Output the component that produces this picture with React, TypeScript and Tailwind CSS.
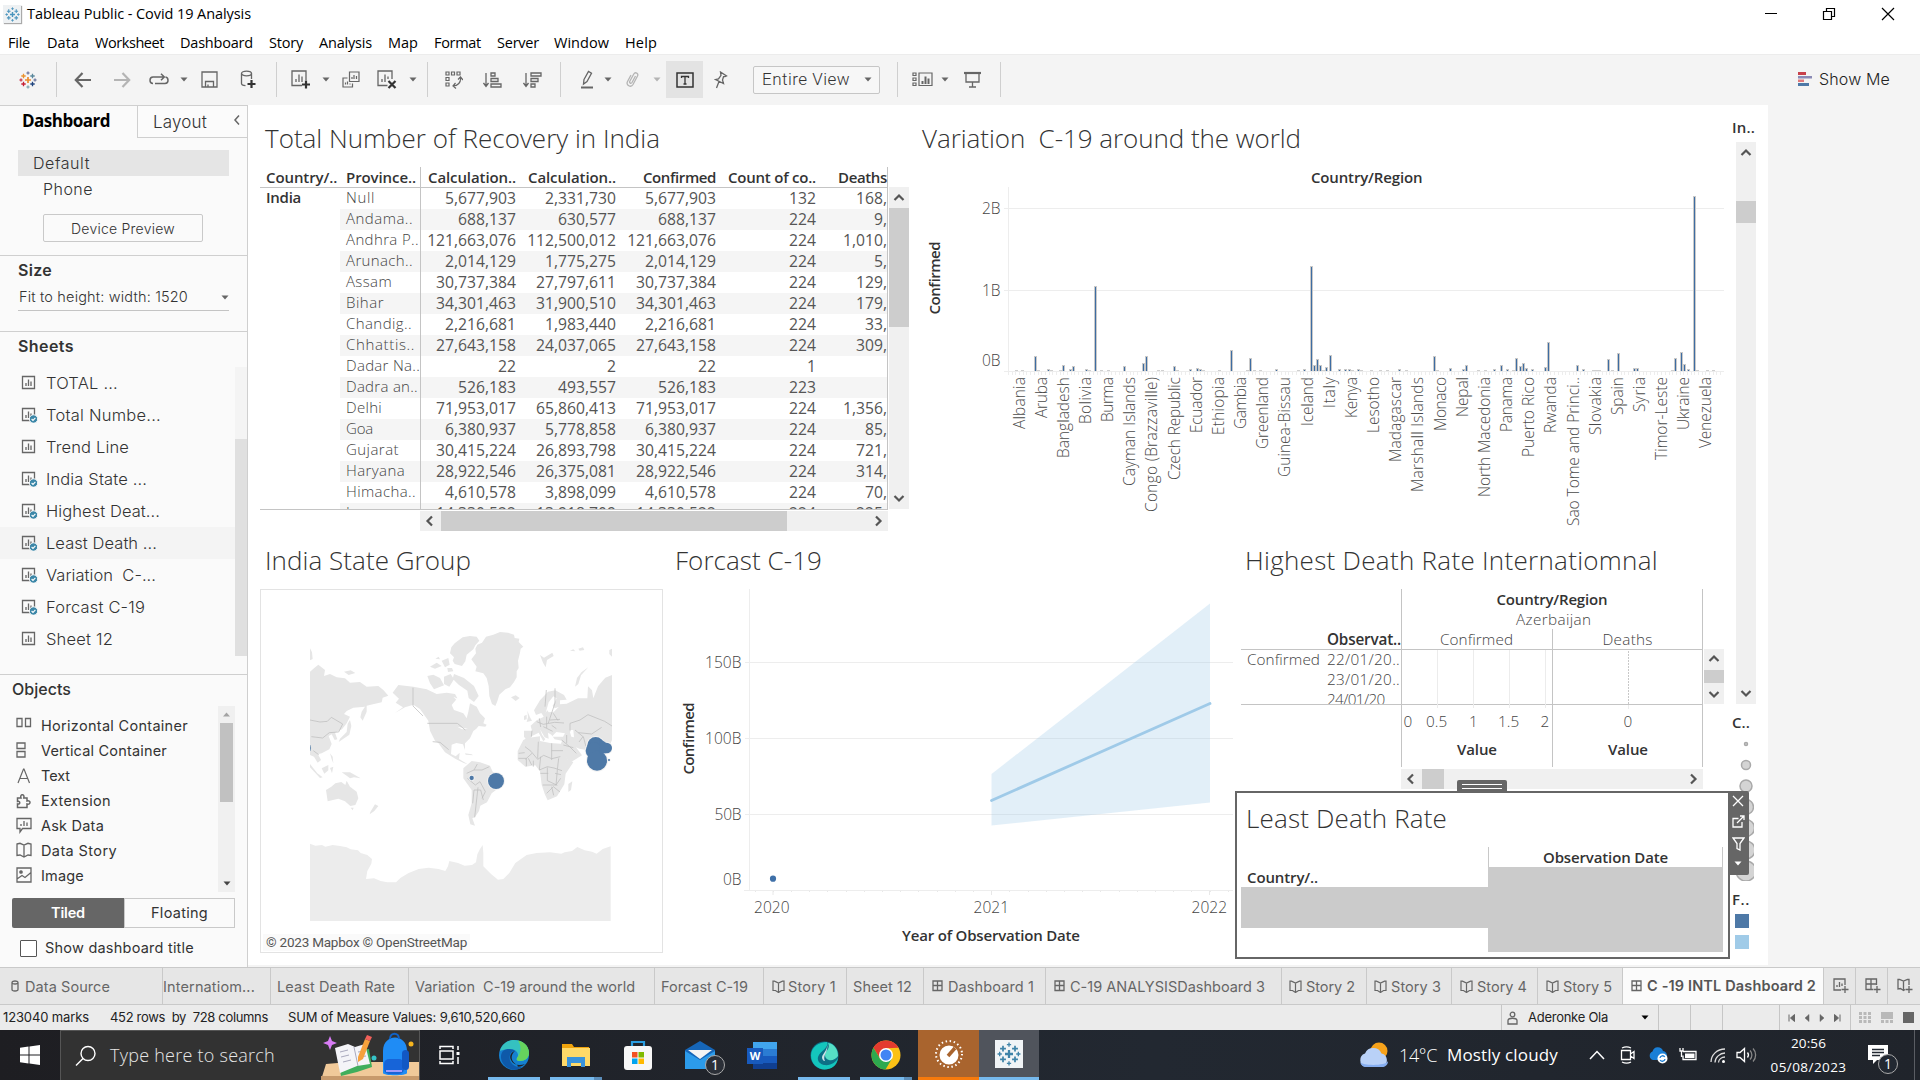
import { useLayoutEffect, useRef, useState, type ReactNode } from "react";

/* Text set to a given measure by distributing the difference between its letters. */
function T({ w, children, className = "" }: { w: number; children: string; className?: string }) {
  const ref = useRef<HTMLSpanElement>(null);
  const [gap, setGap] = useState(0);
  useLayoutEffect(() => {
    const el = ref.current;
    if (!el) return;
    const old = el.style.letterSpacing;
    el.style.letterSpacing = "0px";
    const natural = el.getBoundingClientRect().width;
    el.style.letterSpacing = old;
    setGap((w - natural) / children.length);
  }, [w, children]);
  return (
    <span ref={ref} className={"inline-block whitespace-pre " + className} style={{ letterSpacing: gap + "px" }}>
      {children}
    </span>
  );
}

/* ---------- small icons ---------- */
function Svg({ w, h, children, className = "" }: { w: number; h: number; children: ReactNode; className?: string }) {
  return (
    <svg width={w} height={h} viewBox={`0 0 ${w} ${h}`} fill="none" stroke="#666" strokeWidth="1.3" className={"shrink-0 " + className}>
      {children}
    </svg>
  );
}
const Caret = ({ c = "#666" }: { c?: string }) => (
  <Svg w={8} h={5}><path d="M0.5 0.5h7l-3.500 4z" fill={c} stroke="none" /></Svg>
);
const Chevron = ({ dir }: { dir: "up" | "down" | "left" | "right" }) => {
  const d = { up: "M2.500 9L7 4.500 11.500 9", down: "M2.500 5L7 9.500 11.500 5", left: "M9 2.500L4.500 7 9 11.500", right: "M5 2.500L9.500 7 5 11.500" }[dir];
  return <Svg w={14} h={14}><path d={d} stroke="#555" strokeWidth="2.2" /></Svg>;
};
const plus = (x: number, y: number, r: number, c: string, key?: number, sw = 1.6) => (
  <path key={key} d={`M${x - r} ${y}h${2 * r}M${x} ${y - r}v${2 * r}`} stroke={c} strokeWidth={sw} />
);
const TableauMark = ({ s = 18, mono }: { s?: number; mono?: string }) => (
  <svg width={s} height={s} viewBox="0 0 18 18" fill="none" className="shrink-0">
    {plus(9, 9, 3, mono ?? "#eb8a2d", 0, 1.7)}
    {plus(4.5, 5, 2.2, mono ?? "#eb912c", 1, 1.3)}
    {plus(13.5, 5, 2.2, mono ?? "#59879b", 2, 1.3)}
    {plus(4.5, 13, 2.2, mono ?? "#c72035", 3, 1.3)}
    {plus(13.5, 13, 2.2, mono ?? "#1f447e", 4, 1.3)}
    {plus(9, 2, 1.6, mono ?? "#5b6591", 5, 1)}
    {plus(9, 16, 1.6, mono ?? "#7099a6", 6, 1)}
    {plus(2, 9, 1.6, mono ?? "#c72035", 7, 1)}
    {plus(16, 9, 1.6, mono ?? "#5b6591", 8, 1)}
  </svg>
);
const Sep = () => <div className="h-[35px] w-px bg-[#cfcfcf]" />;
const Cell = ({ className, children }: { className: string; children: ReactNode }) => (
  <div className={"flex shrink-0 items-center justify-center " + className}>{children}</div>
);
const SheetIcon = ({ used }: { used?: boolean }) => (
  <Svg w={18} h={16}>
    <path d="M13.5 1.5H1.5v12h12z" />
    <path d="M5 11V8M7.5 11V4.5M10 11V6.5" />
    {used && (
      <>
        <circle cx="12.5" cy="12" r="4.2" fill="#3c87a8" stroke="#fafafa" strokeWidth="1" />
        <path d="M10.6 12l1.4 1.4 2.4-2.6" stroke="#fff" strokeWidth="1.1" />
      </>
    )}
  </Svg>
);
const GridIcon = () => (
  <Svg w={11} h={12}><path d="M1 1h9v9.500H1zM1 5.500h9M5.500 1v9.500" stroke="#666" /></Svg>
);
const BookIcon = () => (
  <Svg w={13} h={13}><path d="M1 1.200h1.500L6.500 3l4-1.800H12v9.300h-2.500l-3 2-3-2H1zM6.500 3v9" stroke="#666" strokeWidth="1.200" /></Svg>
);

/* ---------- title bar, menu, toolbar ---------- */
const menu: [string, number, string][] = [
  ["File", 22, "w-[39px]"], ["Data", 32, "w-[48px]"], ["Worksheet", 69, "w-[85px]"], ["Dashboard", 73, "w-[89px]"],
  ["Story", 34, "w-[50px]"], ["Analysis", 53, "w-[69px]"], ["Map", 30, "w-[46px]"], ["Format", 47, "w-[63px]"],
  ["Server", 42, "w-[57px]"], ["Window", 55, "w-[71px]"], ["Help", 32, "w-[40px]"],
];

function Header() {
  return (
    <header className="h-[105px] bg-white font-['Open_Sans',sans-serif] text-[14.5px] text-black">
      <div className="flex h-[28px] items-center pl-[3px]">
        <div className="mr-[6px] flex size-[18px] items-center justify-center bg-[#eef1f3] shadow-[1px_1px_1px_#aaa]">
          <TableauMark s={15} mono="#4a94bd" />
        </div>
        <T w={224}>Tableau Public - Covid 19 Analysis</T>
        <div className="ml-auto flex items-center pr-[25px]">
          <Svg w={14} h={14}><path d="M1 6.500h12" stroke="#000" strokeWidth="1" /></Svg>
          <Svg w={14} h={14} className="ml-[44px]"><path d="M1.500 4.500h8v8h-8zM4.500 4V1.500h8v8h-3" stroke="#000" strokeWidth="1.200" /></Svg>
          <Svg w={14} h={14} className="ml-[45px]"><path d="M1 1l12 12M13 1L1 13" stroke="#000" strokeWidth="1.200" /></Svg>
        </div>
      </div>
      <nav className="flex h-[26px] items-center pl-[8px] pt-[4px]">
        {menu.map(([m, w, c]) => (
          <div key={m} className={"shrink-0 " + c}><T w={w}>{m}</T></div>
        ))}
      </nav>
      <div className="flex h-[51px] items-center border-t border-[#ececec] bg-[#f4f4f4] pb-px">
        <Cell className="w-[56px]"><TableauMark s={18} /></Cell>
        <Sep />
        <Cell className="ml-[6px] w-[40px]"><Svg w={18} h={16}><path d="M17 8H2M8.500 1L1.800 8l6.700 7" strokeWidth="2.200" /></Svg></Cell>
        <Cell className="w-[38px]"><Svg w={18} h={16}><path d="M1 8h15M9.500 1l6.700 7-6.700 7" stroke="#b4b4b4" strokeWidth="2.200" /></Svg></Cell>
        <Cell className="w-[36px]"><Svg w={20} h={14}><path d="M4 10.500c-2 0-3-1.200-3-3.200s1-3.300 3-3.300h11M12 .8L15.300 4 12 7.200M16.500 4c1.800.2 2.500 1.500 2.500 3.300s-1 3.200-3 3.200H6" strokeWidth="1.500" /></Svg></Cell>
        <Cell className="w-[13px]"><Caret /></Cell>
        <Cell className="w-[38px]"><Svg w={17} h={17}><path d="M1 1h15v15H1zM4.500 16v-5.500h8V16M7 16v-2.500" /></Svg></Cell>
        <Cell className="w-[40px]"><Svg w={16} h={20}><ellipse cx="6.500" cy="3.500" rx="5" ry="2.300" /><path d="M1.500 3.500v10c0 1.200 2 2 4 2.200M11.500 3.500V9" /><path d="M11.500 10v8M7.500 14h8" stroke="#333" strokeWidth="2.200" /></Svg></Cell>
        <div className="w-[8px]" />
        <Sep />
        <Cell className="ml-[7px] w-[34px]"><Svg w={20} h={19}><path d="M15 10V1H1v14.500h10M5 12V9M8 12V4.500M11 12V6.500" /><path d="M15 10.500v8M11 14.500h8" stroke="#333" strokeWidth="2.200" /></Svg></Cell>
        <Cell className="w-[15px]"><Caret /></Cell>
        <Cell className="w-[35px]"><Svg w={18} h={17}><path d="M7.500 1h9.500v9.500H7.500zM10 8V6M12 8V4M14.500 8V5M5.500 7H1v9h9.500v-3.500M3.500 13.500v-2M5.500 13.500v-3M8 13.500v-1" strokeWidth="1.200" /></Svg></Cell>
        <Cell className="w-[38px]"><Svg w={20} h={19}><path d="M15 9V1H1v14.500h9.500M5 12V9M8 12V4.500M11 9V6.500" /><path d="M11.500 11l7 7M18.500 11l-7 7" stroke="#333" strokeWidth="2.200" /></Svg></Cell>
        <Cell className="w-[14px]"><Caret /></Cell>
        <div className="w-[7px]" />
        <Sep />
        <Cell className="ml-[7px] w-[37px]"><Svg w={18} h={18}><path d="M1 1h3v3H1zM6.500 1h3v3h-3zM12 1h3v3h-3zM1 6.500h3v3H1zM1 12h3v3H1zM15.500 7c.5 4-2.500 8-7.500 8M13 8.500l2.500-2.500L18 9M10.500 12L8 15l3 2.500" strokeWidth="1.200" /></Svg></Cell>
        <Cell className="w-[41px]"><Svg w={19} h={16}><path d="M3 1v13M.500 11L3 14.500 5.500 11M8 1h4v3H8zM8 6.500h7v3H8zM8 12h10v3H8z" /></Svg></Cell>
        <Cell className="w-[38px]"><Svg w={19} h={16}><path d="M3 1v13M.500 11L3 14.500 5.500 11M8 1h10v3H8zM8 6.500h7v3H8zM8 12h4v3H8z" /></Svg></Cell>
        <div className="w-[9px]" />
        <Sep />
        <Cell className="ml-[12px] w-[28px]"><Svg w={14} h={19}><path d="M4 9.500L8.500 1.500l3 1.700L7 11.500l-3.500 2.500z" /><path d="M1 17.500h12" strokeWidth="2" /></Svg></Cell>
        <Cell className="w-[14px]"><Caret /></Cell>
        <Cell className="w-[34px]"><Svg w={14} h={17}><path d="M10.500 5L7 11.500c-1 1.500-3 .5-2.200-1.200l4-7.300c1.500-2.500 5-.5 3.700 2L8 13.500c-2 3.500-7.500.8-5.500-3L6 4" stroke="#b4b4b4" /></Svg></Cell>
        <Cell className="w-[16px]"><Caret c="#b4b4b4" /></Cell>
        <Cell className="ml-px h-[37px] w-[37px] bg-[#e3e3e3]"><Svg w={18} h={16}><path d="M1 1h16v14H1z" stroke="#333" strokeWidth="1.500" /><path d="M5.500 6V4.500h7V6M9 4.500v7.500M7.500 12h3" stroke="#333" /></Svg></Cell>
        <Cell className="w-[36px]"><Svg w={14} h={18}><path d="M6.500 1l6 4-1.500.7-1.500 0L8.500 9l1 3.500L1.500 8.500l3-.7 2.500-3.500zM5 10.500L2.500 17" /></Svg></Cell>
        <div className="ml-[14px] flex h-[28px] w-[127px] items-center rounded-[2px] border border-[#c6c6c6] bg-[#f7f7f7] font-['Roboto',sans-serif] text-[17px] font-light text-[#333]">
          <T w={88} className="ml-[8px] pt-px">Entire View</T>
          <div className="ml-[7px] h-full w-px bg-[#d4d4d4]" />
          <Cell className="w-[22px]"><Caret /></Cell>
        </div>
        <div className="w-[17px]" />
        <Sep />
        <Cell className="ml-[8px] w-[33px]"><Svg w={21} h={15}><path d="M1 1h3v2.500H1zM1 6h3v2.500H1zM1 11h3v2.500H1zM7 1h13v12.500H7z" strokeWidth="1.200" /><path d="M10.500 12V9M13.500 12V4.500M16.500 12V6.500" strokeWidth="2" /></Svg></Cell>
        <Cell className="w-[12px]"><Caret /></Cell>
        <Cell className="w-[42px]"><Svg w={17} h={17}><path d="M0 2h17" strokeWidth="2.200" /><path d="M2 2v9h13V2M8.500 11v5M5 16h7" /></Svg></Cell>
        <div className="w-[7px]" />
        <Sep />
        <div className="ml-auto flex items-center gap-[7px] pb-[2px] pr-[30px] font-['Inter',sans-serif] text-[16px] font-light text-[#222]">
          <svg width="14" height="14" viewBox="0 0 14 14"><path d="M0 0h8v3H0z" fill="#c8414b" /><path d="M0 4h14v2.500H0z" fill="#8a8ab5" /><path d="M0 7.500h6V10H0z" fill="#e0787a" /><path d="M0 11h11v3H0z" fill="#4e79a7" /></svg>
          <T w={71}>Show Me</T>
        </div>
      </div>
    </header>
  );
}

/* ---------- sidebar ---------- */
const sheets: [string, number, boolean][] = [
  ["TOTAL ...", 72, false], ["Total Numbe...", 115, true], ["Trend Line", 83, false], ["India State ...", 101, true],
  ["Highest Deat...", 114, true], ["Least Death ...", 111, true], ["Variation  C-...", 110, true], ["Forcast C-19", 99, true], ["Sheet 12", 67, false],
];
const objects: [string, number, ReactNode][] = [
  ["Horizontal Container", 147, <path d="M1 1.500h5v8H1zM9.500 1.500h5v8h-5z" />],
  ["Vertical Container", 126, <path d="M1 1h8v5.500H1zM1 9.500h8V15H1z" />],
  ["Text", 29, <path d="M2 16L7.500 2h.5L13.500 16M4 11.500h7.500" strokeWidth="1.200" />],
  ["Extension", 70, <path d="M1.500 6h3.500c-1.500-4.500 4-4.500 2.800 0H11v3c4-1 4 4 0 3v3.500H1.500V12c3 .8 3-3.500 0-2.500z" strokeWidth="1.500" />],
  ["Ask Data", 63, <path d="M1 1.500h14v10H6.500L4 15v-3.500H1zM5 9V7M8 9V4M11 9V5.500" />],
  ["Data Story", 76, <path d="M1 2l3-.7L8 3l4-1.700 3 .7v11.500l-3-.5-4 2-4-2-3 .5zM8 3v12" />],
  ["Image", 43, <><path d="M1 1h14v14H1zM1 12l5-3.500 3 2 6-5" /><circle cx="5" cy="5" r="1.200" fill="#666" /></>],
];

function Sidebar() {
  return (
    <aside className="flex h-[862px] w-[248px] shrink-0 flex-col border-r border-t border-[#cfcfcf] bg-[#fafafa] font-['Inter',sans-serif] text-[#333]">
      <div className="flex h-[32px]">
        <div className="w-[137px] pl-[22px] pt-[3px] font-['Open_Sans',sans-serif] text-[17px] font-bold leading-[24px] text-black"><T w={88}>Dashboard</T></div>
        <div className="flex grow items-center border-b border-l border-[#cfcfcf] bg-[#fbfbfb] pl-[15px] text-[17px] font-light">
          <T w={54} className="pt-[2px]">Layout</T>
          <Svg w={8} h={10} className="ml-auto mr-[6px] mb-[3px]"><path d="M6 .5L2 5l4 4.500" strokeWidth="1.500" /></Svg>
        </div>
      </div>
      <div className="ml-[18px] mt-[12px] flex h-[26px] w-[211px] items-center bg-[#e5e5e5] pl-[15px] text-[16px] font-light"><T w={57}>Default</T></div>
      <div className="flex h-[26px] items-center pl-[43px] text-[16px] font-light"><T w={50}>Phone</T></div>
      <div className="ml-[43px] mt-[12px] flex h-[28px] w-[160px] items-center justify-center rounded-[2px] border border-[#c9c9c9] text-[14px] font-light"><T w={104}>Device Preview</T></div>
      <div className="mt-[13px] h-[77px] border-y border-[#cfcfcf] pl-[18px] pt-[3px]">
        <div className="text-[16px] font-semibold leading-[22px]"><T w={34}>Size</T></div>
        <div className="mt-[3px] flex h-[27px] w-[211px] items-center border-b border-[#c4c4c4] pl-px text-[14.500px] font-light">
          <T w={169}>Fit to height: width: 1520</T>
          <span className="ml-auto"><Caret /></span>
        </div>
      </div>
      <div className="h-[35px] pl-[18px] pt-[2px] text-[16px] font-semibold leading-[24px]"><T w={56}>Sheets</T></div>
      <div className="flex h-[308px] border-b border-[#cfcfcf] text-[16.500px] font-light">
        <div className="w-[235px]">
          {sheets.map(([n, w, used]) => (
            <div key={n} className={"flex h-[32px] items-center pl-[21px] " + (n.startsWith("Least") ? "bg-[#f4f4f4]" : "")}>
              <SheetIcon used={used} />
              <T w={w} className="ml-[7px]">{n}</T>
            </div>
          ))}
        </div>
        <div className="h-[289px] w-[12px] bg-[#f4f4f4] pt-[72px]"><div className="h-[217px] bg-[#e0e0e0]" /></div>
      </div>
      <div className="pl-[12px] text-[16px] font-medium leading-[29px]"><T w={59}>Objects</T></div>
      <div className="mt-[2px] flex h-[186px] text-[14.500px]">
        <div className="w-[218px] overflow-hidden pt-[7px]">
          {objects.map(([n, w, icon]) => (
            <div key={n} className="flex h-[25px] items-center pl-[16px]">
              <Svg w={16} h={17}>{icon}</Svg>
              <T w={w} className="ml-[9px]">{n}</T>
            </div>
          ))}
        </div>
        <div className="flex w-[17px] flex-col items-center bg-[#f0f0f0] py-[6px]">
          <Svg w={7} h={5}><path d="M0 4.500L3.500.5 7 4.500z" fill="#a3a3a3" stroke="none" /></Svg>
          <div className="mt-[6px] h-[79px] w-[13px] bg-[#c1c1c1]" />
          <span className="mt-auto flex"><Caret c="#444" /></span>
        </div>
      </div>
      <div className="ml-[12px] mt-[6px] flex h-[30px] w-[223px] text-[14.500px]">
        <div className="flex w-[112px] items-center justify-center rounded-l-[2px] bg-[#666] font-semibold text-white"><T w={34}>Tiled</T></div>
        <div className="flex grow items-center justify-center border border-[#c9c9c9]"><T w={57}>Floating</T></div>
      </div>
      <div className="mt-[11px] flex items-center gap-[8px] pl-[20px] text-[14.500px]">
        <div className="size-[17px] rounded-[1px] border border-[#555] bg-white" />
        <T w={149} className="-mt-[2px]">Show dashboard title</T>
      </div>
    </aside>
  );
}

/* ---------- table of recoveries ---------- */
const rows: string[][] = [
  ["Null", "5,677,903", "2,331,730", "5,677,903", "132", "168,"],
  ["Andama..", "688,137", "630,577", "688,137", "224", "9,"],
  ["Andhra P..", "121,663,076", "112,500,012", "121,663,076", "224", "1,010,"],
  ["Arunach..", "2,014,129", "1,775,275", "2,014,129", "224", "5,"],
  ["Assam", "30,737,384", "27,797,611", "30,737,384", "224", "129,"],
  ["Bihar", "34,301,463", "31,900,510", "34,301,463", "224", "179,"],
  ["Chandig..", "2,216,681", "1,983,440", "2,216,681", "224", "33,"],
  ["Chhattis..", "27,643,158", "24,037,065", "27,643,158", "224", "309,"],
  ["Dadar Na..", "22", "2", "22", "1", ""],
  ["Dadra an..", "526,183", "493,557", "526,183", "223", ""],
  ["Delhi", "71,953,017", "65,860,413", "71,953,017", "224", "1,356,"],
  ["Goa", "6,380,937", "5,778,858", "6,380,937", "224", "85,"],
  ["Gujarat", "30,415,224", "26,893,798", "30,415,224", "224", "721,"],
  ["Haryana", "28,922,546", "26,375,081", "28,922,546", "224", "314,"],
  ["Himacha..", "4,610,578", "3,898,099", "4,610,578", "224", "70,"],
  ["Jammu..", "14,330,522", "13,918,709", "14,330,522", "224", "225,"],
];
const rowLabelWidths = [29, 67, 73, 67, 46, 38, 66, 69, 74, 72, 36, 27, 53, 59, 70, 60];
const cols = "grid grid-cols-[80px_81px_100px_100px_100px_100px_67px]";

function RecoveryTable() {
  return (
    <section className="h-[435px] w-[664px] shrink-0 pl-[12px]">
      <h2 className="pl-[5px] pt-[13px] text-[26px] font-light leading-[40px] text-[#333]"><T w={395}>Total Number of Recovery in India</T></h2>
      <div className="mt-[9px] flex">
        <div className="w-[628px]">
          <div className={cols + " h-[21px] border-b border-[#c4c4c4] text-[15px] font-[560] leading-[20px] text-[#333]"}>
            <T w={73} className="ml-[6px]">Country/..</T>
            <div className="border-r border-[#c4c4c4] pl-[6px]"><T w={70}>Province..</T></div>
            <div className="pl-[7px]"><T w={88}>Calculation..</T></div>
            <div className="pl-[7px]"><T w={88}>Calculation..</T></div>
            <div className="pl-[22px]"><T w={73}>Confirmed</T></div>
            <div className="pl-[7px]"><T w={88}>Count of co..</T></div>
            <div className="border-r border-[#c4c4c4] pl-[17px]"><T w={49}>Deaths</T></div>
          </div>
          <div className="h-[322px] overflow-hidden border-b border-[#c4c4c4]">
            {rows.map((r, i) => (
              <div key={r[0]} className={cols + " h-[21px] text-[15.700px] font-normal leading-[20px] text-[#555]"}>
                <div className="bg-white pl-[6px] text-[15px] font-semibold leading-[19px] text-[#333]">{i === 0 && <T w={35}>India</T>}</div>
                <div className={"border-r border-[#c4c4c4] pl-[6px] text-[15px] font-light leading-[19px] text-[#444] " + (i % 2 ? "bg-[#f5f5f5]" : "")}>
                  <T w={rowLabelWidths[i]}>{r[0]}</T>
                </div>
                {r.slice(1).map((v, j) => (
                  <div key={j} className={"text-right " + (j < 4 ? "pr-[5px] " : "border-r border-[#c4c4c4] ") + (i % 2 ? "bg-[#f5f5f5]" : "")}>{v}</div>
                ))}
              </div>
            ))}
          </div>
        </div>
        <div className="ml-px mt-[20px] flex h-[322px] w-[20px] flex-col items-center bg-[#f0f0f0] py-[4px]">
          <Chevron dir="up" />
          <div className="mt-[3px] h-[119px] w-full bg-[#cdcdcd]" />
          <span className="mt-auto"><Chevron dir="down" /></span>
        </div>
      </div>
      <div className="ml-[160px] mt-[1px] flex h-[20px] w-[468px] items-center bg-[#f0f0f0] px-[3px]">
        <Chevron dir="left" />
        <div className="ml-[4px] h-full w-[346px] bg-[#cdcdcd]" />
        <span className="ml-auto"><Chevron dir="right" /></span>
      </div>
    </section>
  );
}

/* ---------- bar chart by country ---------- */
const countries: [string, number][] = [
  ["Albania", 52], ["Aruba", 41], ["Bangladesh", 81], ["Bolivia", 47], ["Burma", 45], ["Cayman Islands", 109],
  ["Congo (Brazzaville)", 135], ["Czech Republic", 103], ["Ecuador", 56], ["Ethiopia", 58], ["Gambia", 52], ["Greenland", 72],
  ["Guinea-Bissau", 100], ["Iceland", 49], ["Italy", 31], ["Kenya", 41], ["Lesotho", 56], ["Madagascar", 85],
  ["Marshall Islands", 115], ["Monaco", 54], ["Nepal", 40], ["North Macedonia", 120], ["Panama", 55], ["Puerto Rico", 80],
  ["Rwanda", 56], ["Sao Tome and Princi..", 149], ["Slovakia", 58], ["Spain", 38], ["Syria", 35], ["Timor-Leste", 83],
  ["Ukraine", 53], ["Venezuela", 71],
];
const bars: [number, number][] = [
  [1035, 356], [1048, 369], [1063, 365], [1070, 369], [1073, 366], [1086, 369], [1095, 286], [1124, 366], [1143, 363], [1146, 356],
  [1174, 366], [1190, 369], [1197, 368], [1200, 369], [1231, 350], [1250, 358], [1276, 369], [1304, 369], [1311, 266], [1314, 365],
  [1317, 359], [1320, 365], [1326, 367], [1330, 355], [1339, 369], [1345, 369], [1349, 369], [1358, 369], [1399, 369], [1434, 356],
  [1450, 368], [1463, 369], [1466, 365], [1494, 369], [1501, 365], [1507, 369], [1516, 358], [1520, 366], [1523, 363], [1526, 368],
  [1532, 369], [1545, 367], [1548, 342], [1577, 365], [1583, 369], [1608, 359], [1618, 353], [1634, 368], [1637, 368], [1675, 358],
  [1681, 352], [1684, 364], [1688, 369], [1694, 196],
];
const stubs = [1016, 1022, 1038, 1051, 1060, 1089, 1101, 1108, 1158, 1162, 1177, 1203, 1219, 1247, 1254, 1260, 1298, 1323, 1352, 1361, 1371, 1380, 1387, 1406, 1437, 1478, 1485, 1513, 1593, 1596, 1599, 1612, 1672, 1697, 1707, 1713];

function CountryChart() {
  return (
    <section className="w-[818px] shrink-0 pl-[8px]">
      <h2 className="pl-[2px] pt-[13px] text-[26px] font-light leading-[40px] text-[#333]"><T w={379}>Variation  C-19 around the world</T></h2>
      <svg width="808" height="376" viewBox="920 158 808 376" className="font-['Open_Sans',sans-serif]">
        <text x="1311" y="183" textLength="111.500" fontSize="15" fontWeight="560" fill="#333">Country/Region</text>
        <text transform="translate(940 314.500) rotate(-90)" textLength="73" fontSize="15" fontWeight="560" fill="#333">Confirmed</text>
        <g stroke="#ededed" shapeRendering="crispEdges">
          <path d="M1004 208.500h720M1004 290.500h720M1004 371.500h720M1008.500 187v184" />
          {Array.from({ length: 194 }, (_, i) => <path key={i} d={`M${Math.round(1008 + i * 3.69) + 0.5} 372v3`} />)}
        </g>
        <g fontSize="15.500" fontWeight="300" fill="#444">
          <text x="982" y="214" textLength="18.500">2B</text>
          <text x="982" y="296" textLength="18.500">1B</text>
          <text x="982" y="366" textLength="18.500">0B</text>
        </g>
        <g shapeRendering="crispEdges">
          {stubs.map((x) => <path key={x} d={`M${x - 1} 370h3v1h-3z`} fill="#cfcfcf" />)}
          {bars.map(([x, y]) => <path key={x} d={`M${x - 1} ${y}h3V371h-3z`} fill="#c9c9c9" />)}
          {bars.map(([x, y]) => <path key={x} d={`M${x} ${y + 1}h1V371h-1z`} fill="#3d6da3" />)}
        </g>
        <g fontSize="15.500" fontWeight="300" fill="#4a4a4a">
          {countries.map(([n, w], i) => (
            <text key={n} transform={`translate(${1024.500 + i * 22.16} ${377 + w}) rotate(-90)`} textLength={w}>{n}</text>
          ))}
        </g>
      </svg>
    </section>
  );
}

/* ---------- map ---------- */
const land = [
  "M180 325l6 12 2 20-8 4zM180 395L192 385 205 374 225 390 222 408 240 402 260 412 285 415 300 428 330 426 350 440 385 438 400 450 415 467 398 473 395 487 372 492 350 497 350 515 338 542 331 532 335 515 345 500 310 503 290 513 282 522 300 530 290 550 276 568 255 578 262 598 254 600 245 583 236 588 245 612 238 628 215 640 204 643 213 660 203 668 192 650 180 645z",
  "M300 540l4 18-6 26-32 22 4-10 20-20 3-25zM240 640l8 10 2 20-5-12zM180 672l22 28 16 12-8 2-30-32zM215 685l20-10v16l-12 10zM240 684l10-4-4 20zM275 697l25 0 32 18-20-3-12 3-10-8z",
  "M228 750l16-10 12-10 18-4 12 9 4-13 10 18 20 15 5 20-9 20-15 3-16-14-20-8-32 8zM302 803h9l-3 8zM375 793l10 5-12 15-14 10 2-7z",
  "M282 395l20-4 14 8-20 6z",
  "M428 458l17-23 45 5 40 8 30 14 30-4 25 4 7 13-17 20 7 15 28 10 10 15 5-20 5-25 20 10 10 20 15 15-5 15 10 4-4 6-20-2-7 8-9 7-10 22-15 15v20l-6-17-20-4-14 5-2 28 14 7 12-11-2 19 20 12 6 4-12-4-24-12-32-20-20-28-10-7-15-30-5-30-25-35-20-13-25 8-30 17 24-17-22-14 10-12z",
  "M532 408l18-4 20 10 12 22-30 12-12-18zM540 380l20-12 15 10-20 8zM582 410l20-8 10 16-14 22-16-8zM575 362l20-8 4 20-14 8zM612 402l30 12 30 24 14 30-14 18-16-12-4-22-26-18-18-18zM556 356l10-6 4 8zM592 384l14 0 4 10-16 2z",
  "M604 322l10-12 10-8 14-10 22-4 20 2 8 12-12 14-6 12-20 16-4 20-10 14-22-6-6-10 4-10-12-12z",
  "M664 358l14-18-2-14 6-12 14-6 12-18 22-6 20-8 24 2 18 6 2 10 14 2-2 10 14 14-8 6-2 12-6 24 2 22-6 10 0 18-8 14-12 16-14 6-18 16-6 20-6 14-10-6-8-24-2-30-6-24-10-14-24-6 4-14z",
  "M783 472l14-6 12 8-12 9zM645 640l20 3 4 3-22-2zM870 345l12 8 25-15 4 10-20 12-4 22-8-14z",
  "M640 685l25-22 25 4 30 10 8 18 34 17-17 33-20 15-14 27-20 10-4 16-12 18-8 4 8 22-14-4-6-28 10-35V750l-25-35z",
  "M820 600l12-6 38-5v14l30 6 32 2 8 20 12 26 18 10-23 34-4 32-22 36-28 12-8-17-10-30-5-40-14-18-30 4-23-20 0-27zM955 732l12-8-4 26-8 6z",
  "M822 590v-18l24 0-4-15 18-16 20-10 8-14 4-6 4 6 16-2 14-14-12 4-6-8 12-22-10-6-14 18-8 28-6 16-8-12-16 6-6-14 18-30 24-26 22-4 26 14 8 14-20 2 0 12 20-2 34-16h28l2-36 12 12 4 24 14-36 22-26 20-8V600l-10 24-20 22-10 46-26-38-10-24-22-4-10-4 18 24-36 22-18-24-12-24 6-18-22-4-10-14-10-6 2 18-12-4-14-24 6 16 10 14-6 6-14-26-20 10-10 20z",
  "M832 512l8 20 6 10-16 4 4-14zM822 528l8-4 0 14-8 2zM975 440l6-26 14-18 20-14-22 24-8 26zM1078 330l8-4v24l-8-8zM960 332l10-4 6 6zM985 326l14-4 4 8-14 2z",
  "M180 911l16 6 20-2 10 5 22-5 22 3 20 4 12 6 22 3 8 8 20 6 14 12-2 14-12 22-4 24 24-2 20 8 20 4 26 0 14-14 24-14 30-12 30-4 30 4 20 6 8-14 4-16 26 6 20 8 22-2 12-8 4-24 8-16 8-12 2 24 0 40 24 24 20 16 16-2 18-18 18-30 34-24 30-6 40-2 34 4 10-4 22-4 16-12 22 10 22 4 14 6 18-14 24-8v238H180z",
];

function WorldMap() {
  return (
    <section className="w-[418px] shrink-0 pl-[12px]">
      <h2 className="-mt-px pl-[5px] text-[26px] font-light leading-[42px] text-[#333]"><T w={206}>India State Group</T></h2>
      <div className="mt-[8px] flex h-[364px] w-[403px] flex-col border border-[#e3e3e3] pl-[49px] pt-[40px]">
        <svg width="302" height="291" viewBox="180 270 906 873" fill="none">
          {land.map((d, i) => <path key={i} d={d} fill={i === land.length - 1 ? "#ececec" : "#e6e6e6"} />)}
          <path d="M622 560l14 8 18-2M905 590l14-14 26 4-6 10zM958 570l12 0 2 22-8-2zM610 470l22 10 12 30 12 6" fill="#fff" />
          <g stroke="#bdbdbd" strokeWidth="2.200">
            <path d="M489 443v55l30 30M532 550h90l24 20M548 605l22 2 26 22M180 540l30 6 22-2 12-12 34 20-12 24-28 2-20 16-34-4M190 632l16 12" />
            <path d="M650 700l22-10 10-18M672 690l24 0 22-10M652 715l24 20 14-10 16 30-10 20M668 790l4-40 20 0 8 30M684 742l-10 90" />
            <path d="M825 620l18 14 20 24 18-12 24 10 26-6M865 605l-2 50M905 610v50M905 632h34M846 640l-20 18M835 655l10 20M868 690l24-10 20 4 24 8M892 682v40l30 14M878 735h40l14-20M890 760l20-20 20 16M922 690l-4 46M805 655h24v24M850 662v18M872 650l-4 40M926 655l-4 34M806 640l18-2M895 700h-24M915 700l18 4M905 740l6 26" />
            <path d="M935 600l24 20 20 20M950 585l0 25M960 550l30-10 24-16 50 20 22 14M985 578l40 4 30-20M1000 590l8 30 30-20M885 500l4-50M915 445v44l-20 60M860 545l20 8 34-6 28 2M880 560l28 14M910 520l14 22M975 570l24 20-12 16M868 535l4 26M890 530l0 34M900 540l30-2M905 556l14 10M960 550v24M846 572l-2 18M940 615l30 8" />
          </g>
          <g fill="#f2f2f2">
            <circle cx="738" cy="723" r="27" /><circle cx="665" cy="714" r="9" /><circle cx="1077" cy="660" r="5" />
            <circle cx="1070" cy="624" r="19" /><circle cx="1037" cy="616" r="28" /><circle cx="1032" cy="632" r="28" /><circle cx="1041" cy="662" r="33" />
          </g>
          <g fill="#4e79a7">
            <circle cx="738" cy="723" r="24" /><circle cx="665" cy="714" r="6.500" /><circle cx="1077" cy="660" r="3" />
            <circle cx="1070" cy="624" r="16" /><circle cx="1037" cy="616" r="25" /><circle cx="1032" cy="632" r="25" /><circle cx="1041" cy="662" r="30" />
            <path d="M1050 596l18 12v32h-20z" />
          </g>
          <path d="M180 615q4 9 0 18z" fill="#4e79a7" stroke="#4e79a7" />
        </svg>
        <div className="-ml-[47px] mt-auto mb-px flex h-[17px] w-[207px] items-center bg-[#fafafa] pl-[3px] font-['Roboto',sans-serif] text-[13.500px] text-[#555]">
          <T w={201}>© 2023 Mapbox © OpenStreetMap</T>
        </div>
      </div>
    </section>
  );
}

/* ---------- forecast ---------- */
function Forecast() {
  return (
    <section className="w-[569px] shrink-0 pl-[9px]">
      <h2 className="-mt-px text-[26px] font-light leading-[42px] text-[#333]"><T w={147}>Forcast C-19</T></h2>
      <svg width="560" height="371" viewBox="675 581 560 371" className="font-['Open_Sans',sans-serif]">
        <path d="M745 662.500h488M745 738.500h488M745 814.500h488M744 890.500h489M749.500 589v301" stroke="#ededed" shapeRendering="crispEdges" />
        {Array.from({ length: 27 }, (_, i) => <path key={i} d={`M${Math.round(754.500 + i * 18.200) + 0.5} 891v1`} stroke="#e8e8e8" />)}
        <path d="M773 891v4M991.500 891v4M1209.500 891v4" stroke="#e8e8e8" />
        <path d="M991.500 774L1210 603.500V802.500L991.500 825.500z" fill="#a0cbe8" fillOpacity="0.300" />
        <path d="M991.500 800.500L1210 703.500" stroke="#9fcae8" strokeWidth="2.800" strokeLinecap="round" />
        <circle cx="773" cy="878.700" r="3.100" fill="#3f70a8" />
        <g fontSize="15.500" fontWeight="300" fill="#444">
          <text x="705" y="668" textLength="36.500">150B</text>
          <text x="705" y="744" textLength="36.500">100B</text>
          <text x="714.500" y="820" textLength="27">50B</text>
          <text x="723" y="885" textLength="18.500">0B</text>
          <text x="754" y="913" textLength="35.500">2020</text>
          <text x="973.500" y="913" textLength="35.500">2021</text>
          <text x="1191.500" y="913" textLength="35.500">2022</text>
        </g>
        <g fontSize="15" fontWeight="560" fill="#333">
          <text x="902" y="941" textLength="178">Year of Observation Date</text>
          <text transform="translate(694 774.500) rotate(-90)" textLength="72">Confirmed</text>
        </g>
      </svg>
    </section>
  );
}

/* ---------- death rate panels ---------- */
function HighestDeaths() {
  return (
    <section className="h-[251px] pl-[6px]">
      <h2 className="h-[42px] pl-[4px] text-[26px] font-light leading-[40px] text-[#333]"><T w={413}>Highest Death Rate Internatiomnal</T></h2>
      <div className="mt-[7px] flex text-[15.300px] font-light text-[#444]">
        <div className="w-[160px]">
          <div className="flex h-[61px] items-end border-b border-[#c4c4c4] pl-[86px] font-[560] leading-[19px] text-[#333]"><T w={74}>Observat..</T></div>
          <div className="flex h-[55px] overflow-hidden border-b border-[#c4c4c4] leading-[19px]">
            <T w={73} className="ml-[6px] mr-[7px]">Confirmed</T>
            <div className="flex flex-col gap-px"><T w={73}>22/01/20..</T><T w={73}>23/01/20..</T><T w={65}>24/01/20</T></div>
          </div>
        </div>
        <svg width="303" height="178" viewBox="1401 589 303 178" className="font-['Open_Sans',sans-serif]">
          <path d="M1401.500 589v178M1552.500 629v138M1702.500 589v178M1401 649.500h302M1401 704.500h302" stroke="#c4c4c4" shapeRendering="crispEdges" />
          <path d="M1437.500 650v58M1473.500 650v58M1509.500 650v58M1545.500 650v58M1628.500 705v4" stroke="#ececec" shapeRendering="crispEdges" />
          <path d="M1628.500 651v53" stroke="#c8c8c8" strokeDasharray="2 1" />
          <g fontSize="15" fontWeight="560" fill="#333">
            <text x="1496.500" y="605" textLength="111">Country/Region</text>
            <text x="1457" y="755" textLength="40">Value</text>
            <text x="1608" y="755" textLength="40">Value</text>
          </g>
          <g fontSize="15.300" fontWeight="300" fill="#444">
            <text x="1516" y="625" textLength="75">Azerbaijan</text>
            <text x="1440" y="645" textLength="73">Confirmed</text>
            <text x="1602.500" y="645" textLength="50">Deaths</text>
            <text x="1403.500" y="727">0</text><text x="1426" y="727">0.5</text><text x="1469" y="727">1</text>
            <text x="1498" y="727">1.5</text><text x="1540.500" y="727">2</text><text x="1623.500" y="727">0</text>
          </g>
        </svg>
        <div className="mt-[60px] flex h-[55px] w-[20px] flex-col items-center bg-[#f0f0f0] py-[3px]">
          <Chevron dir="up" />
          <div className="mt-[4px] h-[13px] w-full bg-[#cdcdcd]" />
          <span className="mt-auto"><Chevron dir="down" /></span>
        </div>
      </div>
      <div className="ml-[160px] mt-[2px] flex h-[20px] w-[302px] items-center bg-[#f0f0f0] px-[3px]">
        <Chevron dir="left" />
        <div className="ml-[4px] h-full w-[22px] bg-[#cdcdcd]" />
        <span className="ml-auto"><Chevron dir="right" /></span>
      </div>
    </section>
  );
}

function LeastDeaths() {
  return (
    <section className="relative h-[168px] border-2 border-[#666] bg-white pl-[4px]">
      <div className="absolute -top-[13px] left-[220px] flex h-[12px] w-[50px] flex-col justify-center gap-[3px] rounded-t-[2px] bg-[#666] px-[5px]">
        <div className="h-px bg-white" /><div className="h-px bg-white" />
      </div>
      <div className="absolute -right-[21px] -top-[2px] z-10 flex h-[84px] w-[20px] flex-col items-center rounded-r-[2px] bg-[#666] pr-[2px] pt-[4px]">
        <Svg w={12} h={12}><path d="M1 1l10 10M11 1L1 11" stroke="#fff" /></Svg>
        <Svg w={13} h={13} className="mt-[8px]"><path d="M6.500 3.500H1V12h9V7M5 8l6.500-6.500M8 1h4v4" stroke="#fff" /></Svg>
        <Svg w={13} h={14} className="mt-[9px]"><path d="M1 1h11L8 6.500V13L5 11.500v-5z" stroke="#fff" /></Svg>
        <span className="mt-[10px] flex"><Caret c="#fff" /></span>
      </div>
      <h2 className="pl-[5px] pt-[5px] text-[26px] font-light leading-[40px] text-[#333]"><T w={201}>Least Death Rate</T></h2>
      <div className="mt-[9px] flex text-[15px] font-[560] text-[#333]">
        <div className="w-[247px]">
          <div className="flex h-[40px] items-end pl-[6px] leading-[19px]"><T w={71}>Country/..</T></div>
          <div className="h-[41px] bg-[#cbcbcb]" />
        </div>
        <div className="w-[235px]">
          <div className="h-[20px] border-x border-[#c8c8c8] text-center leading-[20px]"><T w={125}>Observation Date</T></div>
          <div className="h-[85px] bg-[#cbcbcb]" />
        </div>
      </div>
    </section>
  );
}

function Legend() {
  const dots: [number, number][] = [[13, 1.500], [34, 4.500], [55, 6], [76, 7.500], [97, 8.500], [119, 9], [140, 10]];
  return (
    <div className="w-[38px] text-[15px] font-[560] text-[#333]">
      <div className="h-[37px] pl-[2px] pt-[11px] leading-[22px]"><T w={23}>In..</T></div>
      <div className="ml-[6px] flex h-[562px] w-[20px] flex-col items-center bg-[#f0f0f0] py-[4px]">
        <Chevron dir="up" />
        <div className="mt-[41px] h-[22px] w-full bg-[#cdcdcd]" />
        <span className="mt-auto"><Chevron dir="down" /></span>
      </div>
      <div className="flex h-[27px] items-end pl-[2px] leading-[17px]"><T w={18}>C..</T></div>
      <svg width="24" height="150" viewBox="0 0 24 150" className="block">
        {dots.map(([y, r]) => <circle key={y} cx="16" cy={y} r={r} fill="#d4d4d4" stroke="#a9a9a9" strokeWidth="1.500" />)}
      </svg>
      <div className="flex h-[32px] items-center pl-[2px] pt-[4px]"><T w={18}>F..</T></div>
      <div className="ml-[5px] mt-px size-[14px] bg-[#4e79a7]" />
      <div className="ml-[5px] mt-[7px] size-[14px] bg-[#a0cbe8]" />
    </div>
  );
}

/* ---------- bottom bars ---------- */
const tabs: [string, number, string, "db" | "grid" | "book" | null][] = [
  ["Data Source", 85, "w-[163px] pl-[11px] gap-[6px]", "db"],
  ["Internatiom...", 92, "w-[108px]", null],
  ["Least Death Rate", 118, "w-[138px] pl-[6px]", null],
  ["Variation  C-19 around the world", 220, "w-[246px] pl-[6px]", null],
  ["Forcast C-19", 87, "w-[109px] pl-[6px]", null],
  ["Story 1", 48, "w-[83px] pl-[8px] gap-[3px]", "book"],
  ["Sheet 12", 59, "w-[77px] pl-[6px]", null],
  ["Dashboard 1", 86, "w-[122px] pl-[8px] gap-[5px]", "grid"],
  ["C-19 ANALYSISDashboard 3", 195, "w-[236px] pl-[8px] gap-[5px]", "grid"],
  ["Story 2", 49, "w-[85px] pl-[7px] gap-[4px]", "book"],
  ["Story 3", 50, "w-[85px] pl-[7px] gap-[4px]", "book"],
  ["Story 4", 50, "w-[86px] pl-[8px] gap-[4px]", "book"],
  ["Story 5", 49, "w-[85px] pl-[8px] gap-[4px]", "book"],
];

function SheetTabs() {
  return (
    <div className="flex h-[38px] border-y border-[#c9c9c9] bg-[#e6e6e6] font-['Inter',sans-serif] text-[14.500px] text-[#666]">
      {tabs.map(([n, w, cls, icon]) => (
        <div key={n} className={"flex shrink-0 items-center border-r border-[#c9c9c9] " + cls}>
          {icon === "db" && <Svg w={8} h={12}><path d="M1 2.500v7c0 2 6 2 6 0v-7c0-2-6-2-6 0s6 2 6 0" /></Svg>}
          {icon === "grid" && <GridIcon />}
          {icon === "book" && <BookIcon />}
          <T w={w} className="pt-px">{n}</T>
        </div>
      ))}
      <div className="flex w-[201px] shrink-0 items-center gap-[5px] border-r border-[#c9c9c9] bg-[#fbfbfb] pl-[8px] font-semibold text-[#555]">
        <GridIcon /><T w={169}>C -19 INTL Dashboard 2</T>
      </div>
      <Cell className="w-[32px] border-r border-[#c9c9c9] pl-[2px]"><Svg w={16} h={16}><path d="M12 7V1H1v11h7M4 9V7M6.500 9V4M9 8V5.500M12 8v7M8.500 11.500h7" /></Svg></Cell>
      <Cell className="w-[32px] border-r border-[#c9c9c9] pl-[2px]"><Svg w={16} h={16}><path d="M11.500 7V1H1v10.500h7M1 6h10.500M6 1v10.500M12 8v7M8.500 11.500h7" /></Svg></Cell>
      <Cell className="w-[32px] pl-[2px]"><Svg w={16} h={16}><path d="M12 7V1.500h-1.500L6.500 3l-4-1.500H1V11l2.500-.5 3 2 1.500-1M6.500 3v9M12 8v7M8.500 11.500h7" /></Svg></Cell>
    </div>
  );
}

function StatusBar() {
  return (
    <div className="flex h-[25px] items-center bg-[#ebebeb] pl-[3px] font-['Inter',sans-serif] text-[13px] text-[#222]">
      <T w={86}>123040 marks</T>
      <T w={158} className="ml-[21px]">452 rows  by  728 columns</T>
      <T w={237} className="ml-[20px]">SUM of Measure Values: 9,610,520,660</T>
      <div className="ml-auto flex h-full">
        <div className="flex w-[157px] items-center border-l border-[#c6c6c6] pl-[5px]">
          <Svg w={11} h={14}><circle cx="5.500" cy="3.500" r="2.300" /><path d="M1 13V9.500C1 6.500 10 6.500 10 9.500V13z" /></Svg>
          <T w={80} className="ml-[10px]">Aderonke Ola</T>
          <span className="ml-[33px]"><Caret c="#000" /></span>
        </div>
        <div className="w-[32px] border-l border-[#c6c6c6]" />
        <div className="w-[32px] border-l border-[#c6c6c6]" />
        <div className="w-[57px] border-l border-[#c6c6c6]" />
        <div className="flex w-[71px] items-center justify-center gap-[9px] border-l border-[#c6c6c6] pr-[2px]">
          <Svg w={7} h={8}><path d="M1 .5v7M6.500.5v7L2.500 4z" fill="#666" strokeWidth="1" /></Svg>
          <Svg w={6} h={8}><path d="M5 .5v7L1 4z" fill="#666" strokeWidth=".5" /></Svg>
          <Svg w={6} h={8}><path d="M1 .5v7L5 4z" fill="#666" strokeWidth=".5" /></Svg>
          <Svg w={7} h={8}><path d="M6 .5v7M.5.5v7L4.500 4z" fill="#666" strokeWidth="1" /></Svg>
        </div>
        <div className="flex w-[70px] items-center justify-center gap-[10px] border-l border-[#c6c6c6] pl-px">
          <svg width="12" height="11" viewBox="0 0 12 11"><path d="M0 0h3v3H0zM4.500 0h3v3h-3zM9 0h3v3H9zM0 4h3v3H0zM4.500 4h3v3h-3zM9 4h3v3H9zM0 8h3v3H0zM4.500 8h3v3h-3zM9 8h3v3H9z" fill="#b9b9b9" /></svg>
          <svg width="12" height="11" viewBox="0 0 12 11"><path d="M0 0h12v7H0zM0 8h3v3H0zM4.500 8h3v3h-3zM9 8h3v3H9z" fill="#b9b9b9" /></svg>
          <div className="h-[11px] w-[11px] bg-[#666]" />
        </div>
      </div>
    </div>
  );
}

function TaskApp({ children, open, wide }: { children: ReactNode; open?: boolean; wide?: boolean }) {
  return (
    <div className="flex h-full w-[62px] shrink-0 flex-col items-center justify-end">
      <div className="flex grow items-center pt-[3px]">{children}</div>
      <div className={"h-[3px] w-[52px] " + (open ? (wide ? "border-r-8 border-[#5b8db9] bg-[#76b9ed]" : "bg-[#76b9ed]") : "")} />
    </div>
  );
}

function Taskbar() {
  return (
    <footer className="flex h-[50px] items-center bg-linear-to-r from-[#1e1e22] via-[#222831] via-60% to-[#20242b] font-['Open_Sans',sans-serif] text-white">
      <Cell className="w-[60px]">
        <svg width="20" height="20" viewBox="0 0 20 20" fill="#fff"><path d="M0 2.800l8.500-1.200v8H0zM9.500 1.400L20 0v9.600H9.500zM0 10.500h8.500v8L0 17.300zM9.500 10.500H20V20l-10.500-1.400z" /></svg>
      </Cell>
      <div className="flex h-[50px] w-[360px] items-center overflow-hidden border border-[#555] border-b-0 bg-[#323232] pl-[14px]">
        <Svg w={22} h={22}><circle cx="13" cy="8.500" r="7" stroke="#fff" strokeWidth="1.400" /><path d="M8 13.500L1 20.500" stroke="#fff" strokeWidth="1.400" /></Svg>
        <T w={165} className="ml-[13px] text-[18px] font-light text-[#e6e6e6]">Type here to search</T>
        <svg width="98" height="48" viewBox="322 1031 98 48" className="ml-auto" fill="none">
          <path d="M327 1063L350 1061H420V1079H322z" fill="#f0c999" /><path d="M322 1075h98v4h-98z" fill="#c79a6c" />
          <path d="M331 1035l2 5 5 2-5 2-2 5-2-5-5-2 5-2z" fill="#d87cf5" />
          <path d="M338 1052l4 23 16-4 15-5-3-18z" fill="#3fae5c" />
          <path d="M336 1047l13-4 7 3 10-3 5 20-13 2-17 7z" fill="#f4f4f8" /><path d="M355 1046l4 19M341 1051l8-2M342 1056l8-2M344 1061l8-2M359 1051l7-1M360 1056l7-1" stroke="#a9a9bd" />
          <path d="M359 1056l7-18 5 2-7 18-5 3z" fill="#f6a13c" /><path d="M366 1038l2-4 5 2-2 4z" fill="#f2605a" />
          <path d="M384 1050c0-18 24-18 24 0v22c0 3-24 3-24 0z" fill="#1f8cf5" /><path d="M391 1038c0-7 9-7 9 0" stroke="#1063c9" strokeWidth="2" />
          <rect x="385" y="1058" width="20" height="15" rx="5" fill="#1764d8" /><path d="M387 1070h16" stroke="#9f9bff" strokeWidth="2" />
          <rect x="403" y="1049" width="7" height="20" rx="3.500" fill="#1258c4" />
          <circle cx="412" cy="1043" r="2.500" fill="#f6b51e" /><circle cx="375" cy="1057" r="2.500" fill="#35c3c9" />
        </svg>
      </div>
      <Cell className="mr-[3px] w-[60px]"><Svg w={22} h={22}><path d="M1 5V2.500h13V5M1 17v2.500h13V17M1 7h13v8H1zM19 2v4M19 13v7" stroke="#fff" strokeWidth="1.500" /><path d="M19 8v3" stroke="#fff" strokeWidth="3" /></Svg></Cell>
      <TaskApp open>
        <svg width="32" height="32" viewBox="0 0 32 32">
          <circle cx="16" cy="16" r="15" fill="#1580d0" /><path d="M2 12C4 4 11 1 16 1c9 0 15 6 15 13 0 5-4 8-9 8-3 0-4-1-3-3 3-4-1-9-7-9-4 0-8 1-10 2z" fill="#35c1c0" />
          <path d="M20 1.500C27 3 31 8 31 14c0 5-4 8-9 8-3 0-4-1-3-3 4-5 5-11 1-17.500z" fill="#66d35d" /><path d="M12 16c-2 7 4 13 12 12-3 3-9 4-14 1-7-4-9-12-5-17 4-3 10-2 12 0-3 0-4.500 2-5 4z" fill="#0c4c9c" opacity=".75" />
          <path d="M17 12c-4 1-6 5-4 9 2 5 8 6 14 4-2 2-5 3-8 2.500 3-.5-2-2-4-5s-2-7 2-10.500z" fill="#1f2329" />
        </svg>
      </TaskApp>
      <TaskApp open wide>
        <svg width="28" height="26" viewBox="0 0 28 26"><path d="M0 2h10l2 3h15v19H0z" fill="#f0a30c" /><path d="M0 6h28v18H0z" fill="#ffd968" /><path d="M5 25V15h18v10h-4v-4H9v4z" fill="#3a93db" /></svg>
      </TaskApp>
      <TaskApp>
        <svg width="30" height="31" viewBox="0 0 30 31"><path d="M9 7V2h12v5" fill="none" stroke="#2a9de0" strokeWidth="2.200" /><rect x="1" y="6" width="28" height="24" rx="3" fill="#f7f7f7" /><path d="M9 12h5.500v5.500H9z" fill="#f25022" /><path d="M15.500 12H21v5.500h-5.500z" fill="#7fba00" /><path d="M9 18.500h5.500V24H9z" fill="#00a4ef" /><path d="M15.500 18.500H21V24h-5.500z" fill="#ffb900" /></svg>
      </TaskApp>
      <TaskApp>
        <div className="relative">
          <svg width="30" height="28" viewBox="0 0 30 28"><path d="M0 9L15 0l15 9v19H0z" fill="#1666b8" /><path d="M3 9h24l-12 9z" fill="#f4f4f4" /><path d="M0 10l15 9 15-9v18H0z" fill="#2c9bea" /></svg>
          <span className="absolute -bottom-[6px] -right-[10px] flex size-[20px] items-center justify-center rounded-full border border-[#aaa] bg-[#2b2f37] text-[14px] leading-none">1</span>
        </div>
      </TaskApp>
      <TaskApp>
        <div className="relative flex h-[27px] w-[30px] flex-col pl-[6px]">
          <div className="h-[7px] bg-[#41a5ee]" /><div className="h-[7px] bg-[#2b7cd3]" /><div className="h-[7px] bg-[#185abd]" /><div className="h-[6px] bg-[#103f91]" />
          <span className="absolute left-0 top-[6px] flex h-[16px] w-[16px] items-center justify-center bg-[#185abd] text-[11px] font-bold leading-none">W</span>
        </div>
      </TaskApp>
      <TaskApp open>
        <svg width="29" height="29" viewBox="0 0 29 29"><circle cx="14.500" cy="14.500" r="14" fill="#0d6f86" /><path d="M17 1c3 5-7 9-9 15-1 4 2 7 6 8 7 1 12-3 14-7-1 8-7 11.500-13.500 11.500S1 23 1 14.500 9 1 17 1z" fill="#14c6bd" /><path d="M18 2c7 1 10 7 10 13-2 3-6 5-9 4-4-1-5-5-3-8s4-5 2-9z" fill="#56e0c6" /><path d="M17 3c1 6-4 9-5 13 0 2 1 4 3 4-3-6 4-9 2-17z" fill="#fff" opacity=".8" /></svg>
      </TaskApp>
      <TaskApp open wide>
        <svg width="30" height="30" viewBox="0 0 30 30"><circle cx="15" cy="15" r="14.500" fill="#fbc116" /><path d="M2.400 7.800A14.500 14.500 0 0127.600 7.800L15 8.200 9 18.500z" fill="#e33b2e" /><path d="M2.400 7.800A14.500 14.500 0 0014.500 29.500L21 18.500 9 18.500z" fill="#2da94f" /><circle cx="15" cy="15" r="7" fill="#fff" /><circle cx="15" cy="15" r="5.500" fill="#4285f4" /></svg>
      </TaskApp>
      <div className="ml-[1px] flex h-full w-[61px] flex-col items-center justify-end border-b-[3px] border-[#f77a0c] bg-[#a9642e]">
        <svg width="32" height="32" viewBox="0 0 32 32" className="my-auto" fill="none"><circle cx="16" cy="16" r="13" stroke="#fff" strokeWidth="2" strokeDasharray="1.500 2.600" /><circle cx="16" cy="17" r="7.500" stroke="#fff" strokeWidth="4" fill="#fff" /><path d="M15 18l7-8" stroke="#a9642e" strokeWidth="3.500" /></svg>
      </div>
      <div className="flex h-full w-[60px] items-center justify-center border-b-[3px] border-[#76b9ed] bg-[#50545c]">
        <div className="flex size-[28px] items-center justify-center bg-[#f1f4f6]"><TableauMark s={24} mono="#3f83a8" /></div>
      </div>
      <div className="ml-auto flex h-full items-center">
        <svg width="32" height="26" viewBox="0 0 32 26"><circle cx="21" cy="9" r="8.500" fill="#f6a21b" /><path d="M8 25a7 7 0 01-1-13.500 9 9 0 0116.500 0A7 7 0 0124 25z" fill="#b9d1f7" /><path d="M2 20c3 4 26 4 28-1 0 4-3 6-6 6H8c-3 0-5-2-6-5z" fill="#86aef0" /></svg>
        <T w={38} className="ml-[9px] text-[18px] font-light">14°C</T>
        <T w={111} className="ml-[10px] text-[17px]">Mostly cloudy</T>
        <Svg w={16} h={10} className="ml-[31px]"><path d="M1 9l7-7.500L15 9" stroke="#fff" strokeWidth="1.500" /></Svg>
        <Svg w={16} h={18} className="ml-[15px]"><path d="M1.500 4.500h9v9h-9zM10.500 8L14 5.500v7L10.500 10M2 2c3-1.500 6-1.500 9 0M2 16c3 1.500 6 1.500 9 0" stroke="#fff" /></Svg>
        <svg width="20" height="18" viewBox="0 0 20 18" className="ml-[12px]"><path d="M5 14a4.500 4.500 0 01-.5-8.500A5.500 5.500 0 0115 5a4.500 4.500 0 01-1 9z" fill="#1a7fd6" /><circle cx="14.500" cy="12.500" r="5" fill="#fff" /><path d="M12 12a2.600 2.600 0 014.800-1M17 13a2.600 2.600 0 01-4.800 1" stroke="#1a7fd6" strokeWidth="1.300" fill="none" /></svg>
        <Svg w={20} h={16} className="ml-[10px]"><path d="M5 4.500h13v8H5v-4M2 1v3h3V1M3.500 4v6" stroke="#fff" /><path d="M7 6.500h9.500v4.500H7z" fill="#fff" stroke="none" /></Svg>
        <Svg w={18} h={17} className="ml-[11px]"><path d="M2 15C2 8 8 2 16 2M6 15.500c0-5 5-9.500 10-9.500M9.500 15.500c0-3 3-5.500 6.500-5.500" stroke="#ddd" /><circle cx="14.500" cy="14.500" r="1.500" fill="#fff" stroke="none" /></Svg>
        <Svg w={22} h={16} className="ml-[9px]"><path d="M1 5.500h3L8.500 1.500v13L4 10.500H1z" stroke="#fff" /><path d="M11.500 5.500c1.200 1.500 1.200 3.500 0 5" stroke="#fff" /><path d="M14 3.500c2.500 2.500 2.500 6.500 0 9M17 1.500c3.500 3.500 3.500 9.500 0 13" stroke="#888" /></Svg>
        <div className="ml-[12px] flex w-[77px] flex-col items-center text-[13.500px] leading-[24px]">
          <T w={35}>20:56</T><T w={76}>05/08/2023</T>
        </div>
        <div className="relative ml-[21px] mr-[26px]">
          <svg width="20" height="20" viewBox="0 0 20 20"><path d="M0 0h20v15H9l-4 4v-4H0z" fill="#fff" /><path d="M4 4.500h12M4 7.500h12M4 10.500h8" stroke="#222831" strokeWidth="1.300" /></svg>
          <span className="absolute -bottom-[9px] -right-[10px] flex size-[20px] items-center justify-center rounded-full border border-[#aaa] bg-[#222831] text-[14px] leading-none">1</span>
        </div>
        <div className="h-full w-[6px] border-l border-[#5a5d63]" />
      </div>
    </footer>
  );
}

export default function App() {
  return (
    <div className="h-[1080px] w-[1920px] overflow-hidden bg-white">
      <Header />
      <div className="flex h-[862px] bg-[#f4f4f4]">
        <Sidebar />
        <main className="flex h-[860px] w-[1520px] bg-white font-['Open_Sans',sans-serif]">
          <div className="w-[1482px]">
            <div className="flex h-[435px]"><RecoveryTable /><CountryChart /></div>
            <div className="flex h-[425px]">
              <WorldMap />
              <Forecast />
              <div className="w-[495px]"><HighestDeaths /><LeastDeaths /></div>
            </div>
          </div>
          <Legend />
        </main>
      </div>
      <SheetTabs />
      <StatusBar />
      <Taskbar />
    </div>
  );
}
